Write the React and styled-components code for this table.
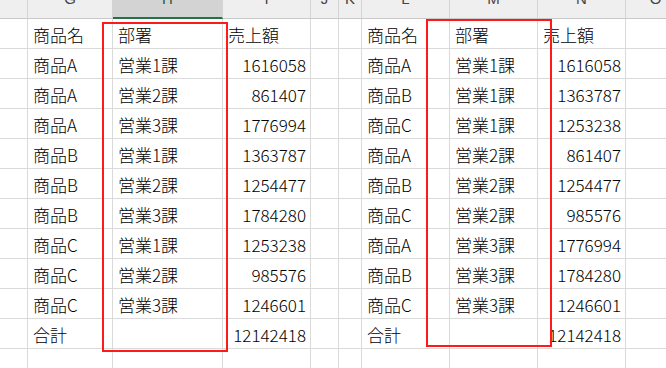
import styled, { createGlobalStyle } from "styled-components"

const GlobalStyle = createGlobalStyle`
    html, body {
        margin: 0;
        padding: 0;
        background: #ffffff;
        overflow: hidden;
    }
`

// widths include the 1px right gridline
const columns = [
    { key: "F", width: 28 },
    { key: "G", width: 85 },
    { key: "H", width: 110, selected: true },
    { key: "I", width: 88 },
    { key: "J", width: 28 },
    { key: "K", width: 23 },
    { key: "L", width: 88 },
    { key: "M", width: 88 },
    { key: "N", width: 88 },
    { key: "O", width: 60 },
]

const rows = [
    ["", "商品名", "部署", "売上額", "", "", "商品名", "部署", "売上額", ""],
    ["", "商品A", "営業1課", 1616058, "", "", "商品A", "営業1課", 1616058, ""],
    ["", "商品A", "営業2課", 861407, "", "", "商品B", "営業1課", 1363787, ""],
    ["", "商品A", "営業3課", 1776994, "", "", "商品C", "営業1課", 1253238, ""],
    ["", "商品B", "営業1課", 1363787, "", "", "商品A", "営業2課", 861407, ""],
    ["", "商品B", "営業2課", 1254477, "", "", "商品B", "営業2課", 1254477, ""],
    ["", "商品B", "営業3課", 1784280, "", "", "商品C", "営業2課", 985576, ""],
    ["", "商品C", "営業1課", 1253238, "", "", "商品A", "営業3課", 1776994, ""],
    ["", "商品C", "営業2課", 985576, "", "", "商品B", "営業3課", 1784280, ""],
    ["", "商品C", "営業3課", 1246601, "", "", "商品C", "営業3課", 1246601, ""],
    ["", "合計", "", 12142418, "", "", "合計", "", 12142418, ""],
    ["", "", "", "", "", "", "", "", "", ""],
]

const Sheet = styled.div`
    position: relative;
    width: 666px;
    height: 368px;
    overflow: hidden;
    font-family: "Noto Sans CJK JP", "Noto Sans", sans-serif;
    color: #000000;
`

const Grid = styled.div`
    display: grid;
    grid-template-columns: ${columns.map((c) => `${c.width}px`).join(" ")};
    grid-template-rows: 19px repeat(${rows.length}, 30px);
`

const HeaderCell = styled.div`
    box-sizing: border-box;
    background: ${(p) => (p.$selected ? "#d3d3d3" : "#efefef")};
    border-right: 1px solid #d4d4d4;
    border-bottom: ${(p) => (p.$selected ? "2px solid #217346" : "1px solid #c8c8c8")};
    display: flex;
    justify-content: center;
    overflow: hidden;
    font-family: "Liberation Sans", sans-serif;
    font-size: 15px;
    color: ${(p) => (p.$selected ? "#1e5c38" : "#444444")};
    & span {
        line-height: 16px;
        margin-top: -9px;
    }
`

const Cell = styled.div`
    box-sizing: border-box;
    border-right: 1px solid #dadada;
    border-bottom: 1px solid #dadada;
    display: flex;
    align-items: center;
    justify-content: ${(p) => (p.$numeric ? "flex-end" : "flex-start")};
    padding: 1px 4px 0 5px;
    font-size: 17px;
    font-weight: 300;
    line-height: 1;
    white-space: nowrap;
`

const Highlight = styled.div`
    position: absolute;
    box-sizing: border-box;
    border: 2px solid #ff1a1a;
    pointer-events: none;
`

const App = () => {
    return (
        <>
            <GlobalStyle />
            <Sheet>
                <Grid>
                    {columns.map((c) => (
                        <HeaderCell key={c.key} $selected={c.selected}>
                            <span>{c.key === "F" ? "" : c.key}</span>
                        </HeaderCell>
                    ))}
                    {rows.map((row, r) =>
                        row.map((value, i) => (
                            <Cell key={`${r}-${i}`} $numeric={typeof value === "number"}>
                                {value}
                            </Cell>
                        ))
                    )}
                </Grid>
                <Highlight style={{ left: 102, top: 22, width: 126, height: 330 }} />
                <Highlight style={{ left: 426, top: 19, width: 126, height: 328 }} />
            </Sheet>
        </>
    )
}

export default App
